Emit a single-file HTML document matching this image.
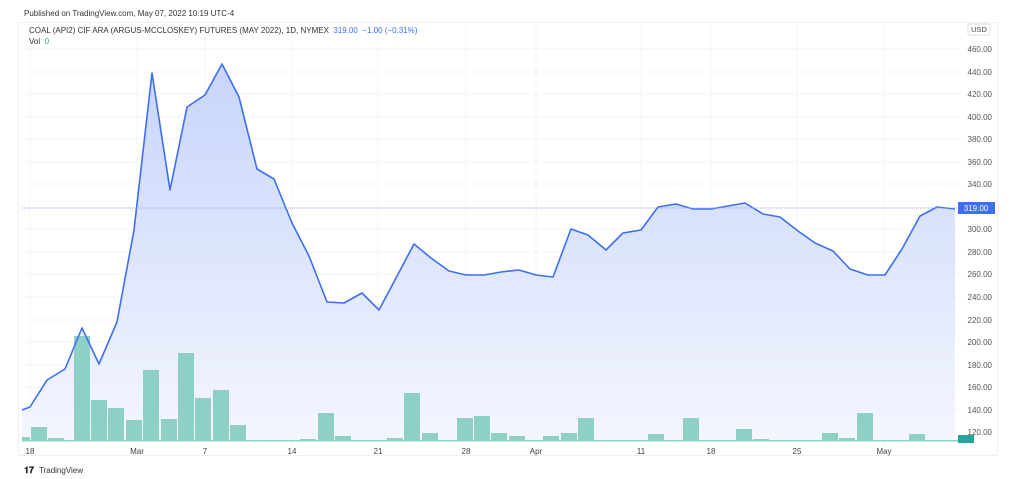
<!DOCTYPE html><html><head><style>
body{margin:0;width:1024px;height:479px;background:#fff;font-family:"Liberation Sans",sans-serif;overflow:hidden;position:relative}
.t{position:absolute;white-space:nowrap}
</style></head><body>
<div class="t" style="left:24px;top:9px;font-size:8px;color:#333">Published on TradingView.com, May 07, 2022 10:19 UTC-4</div>
<svg width="1024" height="479" style="position:absolute;left:0;top:0">
<defs><linearGradient id="g" x1="0" y1="0" x2="0" y2="1"><stop offset="0" stop-color="#c7d5fb"/><stop offset="1" stop-color="#f4f6fe"/></linearGradient></defs>
<rect x="18.5" y="22.5" width="979" height="433" fill="none" stroke="#eef0f3"/>
<g stroke="#f3f4f6">
<line x1="22" x2="960" y1="49" y2="49"/><line x1="22" x2="960" y1="72" y2="72"/><line x1="22" x2="960" y1="94" y2="94"/><line x1="22" x2="960" y1="117" y2="117"/><line x1="22" x2="960" y1="139" y2="139"/><line x1="22" x2="960" y1="162" y2="162"/><line x1="22" x2="960" y1="184" y2="184"/><line x1="22" x2="960" y1="229" y2="229"/><line x1="22" x2="960" y1="252" y2="252"/><line x1="22" x2="960" y1="274" y2="274"/><line x1="22" x2="960" y1="297" y2="297"/><line x1="22" x2="960" y1="320" y2="320"/><line x1="22" x2="960" y1="342" y2="342"/><line x1="22" x2="960" y1="365" y2="365"/><line x1="22" x2="960" y1="387" y2="387"/><line x1="22" x2="960" y1="410" y2="410"/>
<line x1="30" x2="30" y1="22" y2="445"/><line x1="137" x2="137" y1="22" y2="445"/><line x1="205" x2="205" y1="22" y2="445"/><line x1="292" x2="292" y1="22" y2="445"/><line x1="378" x2="378" y1="22" y2="445"/><line x1="466" x2="466" y1="22" y2="445"/><line x1="536" x2="536" y1="22" y2="445"/><line x1="641" x2="641" y1="22" y2="445"/><line x1="711" x2="711" y1="22" y2="445"/><line x1="797" x2="797" y1="22" y2="445"/><line x1="884" x2="884" y1="22" y2="445"/>
</g>
<polygon fill="url(#g)" points="22,410 30,407 47,380 65,369 82,328 99,364 117,322 134,230 152,73 170,190 187,107 205,95 222,64 239,97 257,169 274,179 292,223 309,256 327,302 344,303 362,293 379,310 396,278 414,244 431,258 449,271 466,275 484,275 501,272 519,270 536,275 553,277 571,229 588,235 606,250 623,233 641,230 658,207 676,204 693,209 711,209 728,206 745,203 763,214 780,217 798,231 815,243 833,251 850,269 868,275 885,275 902,249 920,216 937,207 955,209 955,441 22,441"/>
<g fill="#8fd0c6">
<rect x="22" y="437" width="8" height="4"/><rect x="31" y="427" width="16" height="14"/><rect x="48" y="438" width="16" height="3"/><rect x="74" y="336" width="16" height="105"/><rect x="91" y="400" width="16" height="41"/><rect x="108" y="408" width="16" height="33"/><rect x="126" y="420" width="16" height="21"/><rect x="143" y="370" width="16" height="71"/><rect x="161" y="419" width="16" height="22"/><rect x="178" y="353" width="16" height="88"/><rect x="195" y="398" width="16" height="43"/><rect x="213" y="390" width="16" height="51"/><rect x="230" y="425" width="16" height="16"/>
<rect x="300" y="439" width="16" height="2"/><rect x="318" y="413" width="16" height="28"/><rect x="335" y="436" width="16" height="5"/><rect x="352" y="440" width="16" height="1"/><rect x="387" y="438" width="16" height="3"/><rect x="404" y="393" width="16" height="48"/><rect x="422" y="433" width="16" height="8"/><rect x="457" y="418" width="16" height="23"/><rect x="474" y="416" width="16" height="25"/><rect x="491" y="433" width="16" height="8"/><rect x="509" y="436" width="16" height="5"/><rect x="543" y="436" width="16" height="5"/><rect x="561" y="433" width="16" height="8"/><rect x="578" y="418" width="16" height="23"/><rect x="648" y="434" width="16" height="7"/><rect x="683" y="418" width="16" height="23"/><rect x="736" y="429" width="16" height="12"/><rect x="753" y="439" width="16" height="2"/><rect x="822" y="433" width="16" height="8"/><rect x="839" y="438" width="16" height="3"/><rect x="857" y="413" width="16" height="28"/><rect x="909" y="434" width="16" height="7"/>
</g>
<rect x="22" y="440" width="940" height="1.5" fill="#8fd0c6"/>
<rect x="958" y="435" width="16" height="8" fill="#26a69a"/>
<polyline fill="none" stroke="#3d6ff0" stroke-width="1.6" stroke-linejoin="round" points="22,410 30,407 47,380 65,369 82,328 99,364 117,322 134,230 152,73 170,190 187,107 205,95 222,64 239,97 257,169 274,179 292,223 309,256 327,302 344,303 362,293 379,310 396,278 414,244 431,258 449,271 466,275 484,275 501,272 519,270 536,275 553,277 571,229 588,235 606,250 623,233 641,230 658,207 676,204 693,209 711,209 728,206 745,203 763,214 780,217 798,231 815,243 833,251 850,269 868,275 885,275 902,249 920,216 937,207 955,209"/>
<line x1="22" x2="958" y1="208" y2="208" stroke="#8aa5f2" stroke-width="1" stroke-dasharray="1,1"/>
<rect x="958" y="202" width="37" height="12" fill="#3d6ff0"/>
<text x="976" y="211" font-size="8" fill="#fff" text-anchor="middle">319.00</text>
<g font-size="8" fill="#555" text-anchor="end">
<text x="992" y="52">460.00</text><text x="992" y="75">440.00</text><text x="992" y="97">420.00</text><text x="992" y="120">400.00</text><text x="992" y="142">380.00</text><text x="992" y="165">360.00</text><text x="992" y="187">340.00</text><text x="992" y="232">300.00</text><text x="992" y="255">280.00</text><text x="992" y="277">260.00</text><text x="992" y="300">240.00</text><text x="992" y="323">220.00</text><text x="992" y="345">200.00</text><text x="992" y="368">180.00</text><text x="992" y="390">160.00</text><text x="992" y="413">140.00</text><text x="992" y="435">120.00</text>
</g>
<rect x="968" y="24" width="22" height="11" rx="2" fill="#fff" stroke="#ddd"/>
<text x="979" y="32" font-size="7.5" fill="#444" text-anchor="middle">USD</text>
<g font-size="8" fill="#444" text-anchor="middle">
<text x="30" y="454">18</text><text x="137" y="454">Mar</text><text x="205" y="454">7</text><text x="292" y="454">14</text><text x="378" y="454">21</text><text x="466" y="454">28</text><text x="536" y="454">Apr</text><text x="641" y="454">11</text><text x="711" y="454">18</text><text x="797" y="454">25</text><text x="884" y="454">May</text>
</g>
<text x="24" y="473" font-size="9" font-weight="bold" fill="#222">𝟏𝟕</text>
<text x="39" y="473" font-size="8" fill="#333">TradingView</text>
</svg>
<div class="t" style="left:29px;top:26px;font-size:8px;color:#333">COAL (API2) CIF ARA (ARGUS-MCCLOSKEY) FUTURES (MAY 2022), 1D, NYMEX <span style="color:#3d6ff0">&nbsp;319.00 &nbsp;−1.00 (−0.31%)</span></div>
<div class="t" style="left:29px;top:37px;font-size:8px;color:#333">Vol <span style="color:#26a69a">&nbsp;0</span></div>
</body></html>
